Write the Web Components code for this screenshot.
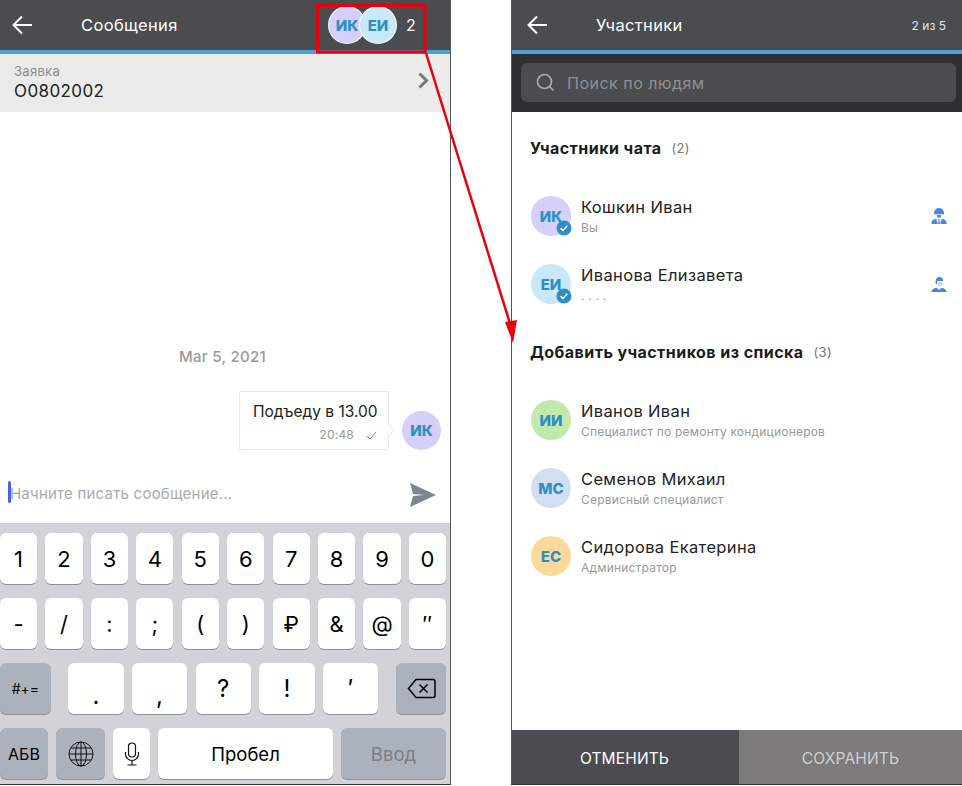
<!DOCTYPE html>
<html lang="ru">
<head>
<meta charset="utf-8">
<title>Участники</title>
<style>
  html, body { margin: 0; padding: 0; background: #fff; }
  body { width: 962px; height: 786px; overflow: hidden; font-family: "Inter", "Liberation Sans", sans-serif; }
</style>
</head>
<body>
<screens-view>
  <phone-frame side="left">
    <top-bar heading="Сообщения" title-gap="49">
      <header-avatars></header-avatars>
    </top-bar>
    <request-bar label="Заявка" number="O0802002"></request-bar>
    <chat-area date="Mar 5, 2021">
      <chat-bubble time="20:48" initials="ИК" color="#d4d0f9">Подъеду в 13.00</chat-bubble>
    </chat-area>
    <message-input placeholder="Начните писать сообщение..."></message-input>
    <ios-keyboard></ios-keyboard>
  </phone-frame>
  <phone-frame side="right">
    <top-bar heading="Участники" title-gap="49" style="padding-left:15px">
      <span style="font-size:12px;margin-right:16px;color:#e6e6e6">2 из 5</span>
    </top-bar>
    <search-band placeholder="Поиск по людям"></search-band>
    <people-list>
      <section-title count="(2)" style="margin-top:26px">Участники чата</section-title>
      <person-row initials="ИК" color="#d4d0f9" name="Кошкин Иван" role="Вы" checked icon="helmet" style="margin-top:38px"></person-row>
      <person-row initials="ЕИ" color="#c9e8fa" name="Иванова Елизавета" role=". . . ." checked icon="agent" style="margin-top:28px"></person-row>
      <section-title count="(3)" style="margin-top:38px">Добавить участников из списка</section-title>
      <person-row initials="ИИ" color="#bfeaac" name="Иванов Иван" role="Специалист по ремонту кондиционеров" style="margin-top:38px"></person-row>
      <person-row initials="МС" color="#d3def2" name="Семенов Михаил" role="Сервисный специалист" style="margin-top:28px"></person-row>
      <person-row initials="ЕС" color="#fbdb9c" name="Сидорова Екатерина" role="Администратор" style="margin-top:28px"></person-row>
    </people-list>
    <action-bar cancel="ОТМЕНИТЬ" save="СОХРАНИТЬ"></action-bar>
  </phone-frame>
  <red-callout></red-callout>
</screens-view>

<script>
class ScreensView extends HTMLElement {
  constructor() {
    super();
    this.attachShadow({ mode: 'open' });
    this.shadowRoot.innerHTML = `
      <style>
        :host { display: flex; position: relative; width: 962px; height: 785px; justify-content: space-between; }
      </style>
      <slot></slot>`;
  }
}

class PhoneFrame extends HTMLElement {
  constructor() {
    super();
    this.attachShadow({ mode: 'open' });
    this.shadowRoot.innerHTML = `
      <style>
        :host {
          display: flex; flex-direction: column; box-sizing: border-box;
          width: 451px; height: 785px; background: #fff;
          border-bottom: 1px solid #333;
        }
        :host([side="left"]) { border-right: 1px solid #555; }
        :host([side="right"]) { border-left: 1px solid #555; }
      </style>
      <slot></slot>`;
  }
}

class TopBar extends HTMLElement {
  connectedCallback() {
    const gap = this.getAttribute('title-gap') || 50;
    const root = this.shadowRoot || this.attachShadow({ mode: 'open' });
    root.innerHTML = `
      <style>
        :host {
          display: flex; align-items: center; box-sizing: border-box; flex: none;
          height: 54px; padding-left: 12px; color: #fff;
          background: #4b4c50; border-bottom: 4px solid #4f9fd8;
        }
        svg { flex: none; width: 20px; height: 20px; margin-right: ${gap}px; }
        .title { flex: 1; font-size: 16.5px; letter-spacing: .35px; font-weight: 400; }
      </style>
      <svg viewBox="0 0 20 20" fill="none" stroke="#fff" stroke-width="2"><path d="M1 10h19M10 1.500L1.500 10l8.500 8.500"/></svg>
      <span class="title">${this.getAttribute('heading')}</span>
      <slot></slot>`;
  }
}

class HeaderAvatars extends HTMLElement {
  constructor() {
    super();
    this.attachShadow({ mode: 'open' });
    this.shadowRoot.innerHTML = `
      <style>
        :host { display: flex; align-items: center; margin-right: 35px; }
        person-avatar { border-radius: 50%; box-shadow: 0 0 0 1px #fff; }
        person-avatar + person-avatar { margin-left: -5px; }
        .count { font-size: 16px; margin-left: 10px; width: 9px; }
      </style>
      <person-avatar initials="ИК" color="#d4d0f9" size="36"></person-avatar>
      <person-avatar initials="ЕИ" color="#c9e8fa" size="36"></person-avatar>
      <span class="count">2</span>`;
  }
}

class PersonAvatar extends HTMLElement {
  connectedCallback() {
    const size = this.getAttribute('size') || 40;
    const root = this.shadowRoot || this.attachShadow({ mode: 'open' });
    const badge = this.hasAttribute('checked') ? `
      <svg class="badge" viewBox="0 0 16 16"><circle cx="8" cy="8" r="7.500" fill="#2f8fc4"/><path d="M4.600 8.200l2.300 2.200 4.400-4.600" fill="none" stroke="#fff" stroke-width="1.500"/></svg>` : '';
    root.innerHTML = `
      <style>
        :host {
          display: flex; flex: none; position: relative; align-items: center; justify-content: center;
          width: ${size}px; height: ${size}px; border-radius: 50%;
          background: ${this.getAttribute('color')}; color: #2e8fc5;
          font-size: 15px; font-weight: 800; font-family: "Inter", sans-serif;
        }
        .badge { position: absolute; right: -1px; bottom: 0; width: 16px; height: 16px; }
      </style>
      ${this.getAttribute('initials')}${badge}`;
  }
}

class RequestBar extends HTMLElement {
  connectedCallback() {
    const root = this.shadowRoot || this.attachShadow({ mode: 'open' });
    root.innerHTML = `
      <style>
        :host {
          display: flex; align-items: center; justify-content: space-between; flex: none; box-sizing: border-box;
          height: 58px; padding: 0 21px 0 14px; background: #ebebeb;
        }
        .label { font-size: 13px; color: #8a8a8a; line-height: 15px; letter-spacing: .3px; }
        .num { font-size: 17px; color: #222; line-height: 21px; margin-top: 2px; letter-spacing: .4px; }
        svg { width: 11px; height: 17px; margin-top: -6px; }
      </style>
      <div>
        <div class="label">${this.getAttribute('label')}</div>
        <div class="num">${this.getAttribute('number')}</div>
      </div>
      <svg viewBox="0 0 11 17" fill="none" stroke="#777" stroke-width="3"><path d="M1.500 1.500l7 7-7 7"/></svg>`;
  }
}

class ChatArea extends HTMLElement {
  connectedCallback() {
    const root = this.shadowRoot || this.attachShadow({ mode: 'open' });
    root.innerHTML = `
      <style>
        :host { display: flex; flex-direction: column; flex: 1; justify-content: flex-end; }
        .date { text-align: center; font-size: 15px; font-weight: 500; color: #999; line-height: 18px; margin: 0 5px 25px 0; letter-spacing: .3px; }
      </style>
      <div class="date">${this.getAttribute('date')}</div>
      <slot></slot>`;
  }
}

class ChatBubble extends HTMLElement {
  connectedCallback() {
    const root = this.shadowRoot || this.attachShadow({ mode: 'open' });
    root.innerHTML = `
      <style>
        :host { display: flex; align-items: flex-end; justify-content: flex-end; gap: 13px; padding-right: 9px; }
        .bubble {
          position: relative; box-sizing: border-box; width: 150px; height: 59px;
          padding: 11px 11px 0 13px; background: #fff;
          border: 1px solid #e8e8e8; border-radius: 2px; font-size: 15.500px; color: #222;
        }
        .bubble::after {
          content: ""; position: absolute; right: -5px; top: 34px; width: 8px; height: 8px;
          background: #fff; border: solid #e8e8e8; border-width: 1px 1px 0 0; transform: rotate(45deg);
        }
        .text { line-height: 18px; white-space: nowrap; }
        .meta { display: flex; justify-content: flex-end; align-items: center; gap: 12px; margin-top: 6px; font-size: 12px; color: #999; line-height: 16px; letter-spacing: .2px; }
        .meta svg { width: 11px; height: 9px; }
      </style>
      <div class="bubble">
        <div class="text"><slot></slot></div>
        <div class="meta"><span>${this.getAttribute('time')}</span>
          <svg viewBox="0 0 11 9" fill="none" stroke="#888" stroke-width="1"><path d="M1 5l3 3 6-7"/></svg>
        </div>
      </div>
      <person-avatar initials="${this.getAttribute('initials')}" color="${this.getAttribute('color')}" size="39"></person-avatar>`;
  }
}

class MessageInput extends HTMLElement {
  connectedCallback() {
    const root = this.shadowRoot || this.attachShadow({ mode: 'open' });
    root.innerHTML = `
      <style>
        :host { display: flex; align-items: center; flex: none; height: 73px; padding: 14px 14px 0 8px; box-sizing: border-box; }
        .caret { width: 3px; height: 22px; border-radius: 2px; background: #4a63d8; margin-top: -3px; flex: none; }
        .ph { flex: 1; font-size: 15px; color: #aaa; margin-top: -1px; margin-left: -1px; letter-spacing: .22px; white-space: nowrap; }
        svg { width: 26px; height: 24px; margin-top: 3px; }
      </style>
      <span class="caret"></span>
      <span class="ph">${this.getAttribute('placeholder')}</span>
      <svg viewBox="0 0 26 24" fill="#7c8592"><path d="M0 0l26 12L0 24l3-11 11-1-11-1z"/></svg>`;
  }
}

class KbKey extends HTMLElement {
  constructor() {
    super();
    this.attachShadow({ mode: 'open' });
    this.shadowRoot.innerHTML = `
      <style>
        :host {
          display: flex; align-items: center; justify-content: center; box-sizing: border-box;
          height: 51px; min-width: 0; background: #fff; color: #000; border-radius: 6px;
          box-shadow: 0 1px 0 #8e9096; font-size: 22px; font-family: "Inter", sans-serif; font-weight: 400;
        }
        :host([dark]) { background: #acb2bc; }
      </style>
      <slot></slot>`;
  }
}

class IosKeyboard extends HTMLElement {
  constructor() {
    super();
    this.attachShadow({ mode: 'open' });
    const row1 = '1234567890'.split('').map(k => `<kb-key>${k}</kb-key>`).join('');
    const row2 = ['-', '/', ':', ';', '(', ')', '₽', '&amp;', '@', '″'].map(k => `<kb-key>${k}</kb-key>`).join('');
    this.shadowRoot.innerHTML = `
      <style>
        :host { display: flex; flex-direction: column; flex: none; gap: 14px; box-sizing: border-box; height: 261px; padding: 10px 4px 0 0; background: #d1d3d9; }
        .grid { display: grid; grid-template-columns: repeat(10, 1fr); column-gap: 8.300px; }
        .row3, .row4 { display: flex; }
        .row3 { gap: 8.300px; }
        .row3 .sym { width: 55.500px; font-size: 24px; }
        .row3 .low { padding-top: 14px; }
        .row4 { gap: 8px; }
        .small { font-size: 14px; }
        svg { display: block; }
      </style>
      <div class="grid">${row1}</div>
      <div class="grid">${row2}</div>
      <div class="row3">
        <kb-key dark class="small" style="width:51px;margin-right:9px">#+=</kb-key>
        <kb-key class="sym low">.</kb-key>
        <kb-key class="sym low">,</kb-key>
        <kb-key class="sym">?</kb-key>
        <kb-key class="sym">!</kb-key>
        <kb-key class="sym">′</kb-key>
        <kb-key dark style="width:50px;margin-left:9.500px">
          <svg width="29" height="21" viewBox="0 0 29 21" fill="none" stroke="#000" stroke-width="1.500"><path d="M9 1.500h17a2 2 0 0 1 2 2v14a2 2 0 0 1-2 2H9L1.500 10.500z"/><path d="M12.500 6.500l8 8M20.500 6.500l-8 8"/></svg>
        </kb-key>
      </div>
      <div class="row4">
        <kb-key dark style="width:48px;font-size:16px">АБВ</kb-key>
        <kb-key dark style="width:49px">
          <svg width="26" height="26" viewBox="0 0 26 26" fill="none" stroke="#111" stroke-width="1"><circle cx="13" cy="13" r="12"/><ellipse cx="13" cy="13" rx="5.500" ry="12"/><path d="M13 1v24M1 13h24M3 7h20M3 19h20"/></svg>
        </kb-key>
        <kb-key style="width:37px">
          <svg width="16" height="24" viewBox="0 0 16 24" fill="none" stroke="#111" stroke-width="1.200"><rect x="4.500" y="1" width="7" height="14" rx="3.500"/><path d="M1.500 10v2a6.500 6.500 0 0 0 13 0v-2M8 18.500V23M3.500 23h9"/></svg>
        </kb-key>
        <kb-key style="width:175px;font-size:18.500px">Пробел</kb-key>
        <kb-key dark style="width:105px;font-size:18.500px;color:#7b7f86">Ввод</kb-key>
      </div>`;
  }
}

class SearchBand extends HTMLElement {
  connectedCallback() {
    const root = this.shadowRoot || this.attachShadow({ mode: 'open' });
    root.innerHTML = `
      <style>
        :host { display: block; flex: none; box-sizing: border-box; height: 58px; padding: 9px 6px 10px 9px; background: #2f2f34; }
        .box {
          display: flex; align-items: center; gap: 12px; height: 39px; box-sizing: border-box;
          padding-left: 15px; background: #4b4c50; border-radius: 6px;
          font-size: 16px; color: #8f9094; letter-spacing: .5px;
        }
        svg { width: 19px; height: 19px; }
      </style>
      <div class="box">
        <svg viewBox="0 0 19 19" fill="none" stroke="#a9aaad" stroke-width="1.700"><circle cx="8.500" cy="8.500" r="7"/><path d="M13.500 13.500l4 4"/></svg>
        <span>${this.getAttribute('placeholder')}</span>
      </div>`;
  }
}

class PeopleList extends HTMLElement {
  constructor() {
    super();
    this.attachShadow({ mode: 'open' });
    this.shadowRoot.innerHTML = `
      <style>
        :host { display: flex; flex-direction: column; flex: 1; padding: 0 15px 0 19px; }
      </style>
      <slot></slot>`;
  }
}

class SectionTitle extends HTMLElement {
  connectedCallback() {
    const root = this.shadowRoot || this.attachShadow({ mode: 'open' });
    root.innerHTML = `
      <style>
        :host { display: flex; align-items: center; gap: 10px; height: 20px; margin-left: -1px; font-size: 16px; letter-spacing: .45px; font-weight: 700; color: #1c1c1c; }
        .count { font-size: 13px; font-weight: 400; color: #777; letter-spacing: .3px; }
      </style>
      <span><slot></slot></span>
      <span class="count">${this.getAttribute('count')}</span>`;
  }
}

const ROLE_ICONS = {
  helmet: '<path d="M3 6.200V5a5 5 0 0 1 10 0v1.200z"/><path d="M5.800 7h4.400v.8c0 1.200-1 2-2.200 2s-2.200-.8-2.200-2z"/><path d="M.5 16v-1.500c0-2 2-3.300 4.800-3.800L6.800 16zM15.500 16v-1.500c0-2-2-3.300-4.800-3.800L9.200 16zM7.500 10.800h1l.4 5.200H7.100z"/>',
  agent: '<path d="M4.500 6c0-3 1.500-5 4-5 2 0 3.500 1 3.500 3v1H6.500L5.800 8.500C5 8 4.500 7 4.500 6z"/><path d="M6.800 6.500h4.600c0 2.500-1 3.800-2.300 3.800S6.800 9 6.800 6.500z" opacity=".35"/><path d="M.5 16c0-2.500 2-3.800 4.800-4.300L8 14l2.700-2.300c2.800.5 4.800 1.800 4.800 4.300z"/>'
};

class PersonRow extends HTMLElement {
  connectedCallback() {
    const root = this.shadowRoot || this.attachShadow({ mode: 'open' });
    const icon = this.getAttribute('icon');
    root.innerHTML = `
      <style>
        :host { display: flex; align-items: center; height: 40px; gap: 10px; }
        .text { flex: 1; min-width: 0; }
        .name { font-size: 16.500px; color: #222; line-height: 20px; letter-spacing: .35px; }
        .role { font-size: 12px; color: #999; line-height: 16px; margin-top: 3px; letter-spacing: .2px; }
        svg { width: 16px; height: 16px; fill: #4a86e0; }
      </style>
      <person-avatar initials="${this.getAttribute('initials')}" color="${this.getAttribute('color')}" ${this.hasAttribute('checked') ? 'checked' : ''}></person-avatar>
      <div class="text">
        <div class="name">${this.getAttribute('name')}</div>
        <div class="role">${this.getAttribute('role')}</div>
      </div>
      ${icon ? `<svg viewBox="0 0 16 16">${ROLE_ICONS[icon]}</svg>` : ''}`;
  }
}

class ActionBar extends HTMLElement {
  connectedCallback() {
    const root = this.shadowRoot || this.attachShadow({ mode: 'open' });
    root.innerHTML = `
      <style>
        :host { display: flex; flex: none; height: 54px; font-size: 15.500px; letter-spacing: .15px; }
        div { display: flex; align-items: center; justify-content: center; padding-top: 2px; box-sizing: border-box; }
        .cancel { width: 227px; background: #4b4c50; color: #fff; padding-right: 2px; }
        .save { flex: 1; background: #7d7b7c; color: #cfcfcf; }
      </style>
      <div class="cancel">${this.getAttribute('cancel')}</div>
      <div class="save">${this.getAttribute('save')}</div>`;
  }
}

// the red annotation lying over both screens
class RedCallout extends HTMLElement {
  constructor() {
    super();
    this.attachShadow({ mode: 'open' });
    this.shadowRoot.innerHTML = `
      <style>
        :host { position: absolute; left: 0; top: 0; width: 962px; height: 785px; pointer-events: none; }
        svg { display: block; }
      </style>
      <svg width="962" height="785" fill="none" stroke="#e8000d">
        <path d="M317.500 5.500h107.500v46.500H317.500z" stroke-width="3"/>
        <path d="M426 53L512 330" stroke-width="2.500"/>
        <path d="M505 322l8 21 4-23z" fill="#e8000d" stroke="none"/>
      </svg>`;
  }
}

customElements.define('person-avatar', PersonAvatar);
customElements.define('screens-view', ScreensView);
customElements.define('phone-frame', PhoneFrame);
customElements.define('top-bar', TopBar);
customElements.define('header-avatars', HeaderAvatars);
customElements.define('request-bar', RequestBar);
customElements.define('chat-area', ChatArea);
customElements.define('chat-bubble', ChatBubble);
customElements.define('message-input', MessageInput);
customElements.define('kb-key', KbKey);
customElements.define('ios-keyboard', IosKeyboard);
customElements.define('search-band', SearchBand);
customElements.define('people-list', PeopleList);
customElements.define('section-title', SectionTitle);
customElements.define('person-row', PersonRow);
customElements.define('action-bar', ActionBar);
customElements.define('red-callout', RedCallout);
</script>
</body>
</html>
